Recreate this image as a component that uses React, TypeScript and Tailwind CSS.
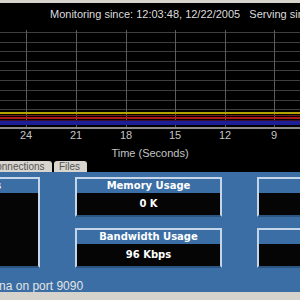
import React from "react";

type stat = {
    title: string;
    value: string;
    id: number;
};

const hLines = [2, 12, 21, 31, 40, 50, 60, 70, 79];
const vLines = [26, 76, 126, 175, 225, 274];
const ticks = ["24", "21", "18", "15", "12", "9"];

const Chart: React.FC = () => {
    return (
        <svg width={300} height={130} className="block">
            {hLines.map((y) => (
                <line key={y} x1={0} x2={300} y1={y + 0.5} y2={y + 0.5} stroke="#3e3e3e" strokeWidth={1}/>
            ))}
            {vLines.map((x) => (
                <line key={x} x1={x + 0.5} x2={x + 0.5} y1={0} y2={98} stroke="#5c5c5c" strokeWidth={1}/>
            ))}
            <rect x={0} y={82} width={300} height={2} fill="#b4a400"/>
            <rect x={0} y={85} width={300} height={1} fill="#6e1a12"/>
            <rect x={0} y={87} width={300} height={2} fill="#a8181c"/>
            <rect x={0} y={90} width={300} height={1} fill="#3a1030"/>
            <rect x={0} y={91} width={300} height={4} fill="#1e1e96"/>
            <rect x={0} y={97} width={300} height={2} fill="#8c8c8c"/>
            {vLines.map((x, i) => (
                <text
                    key={x}
                    x={x}
                    y={109}
                    textAnchor="middle"
                    fontSize={11}
                    fill="#c4c4c4"
                    fontFamily="'Liberation Sans', Arial, sans-serif"
                >
                    {ticks[i]}
                </text>
            ))}
            <text
                x={150}
                y={127}
                textAnchor="middle"
                fontSize={11}
                fill="#c4c4c4"
                fontFamily="'Liberation Sans', Arial, sans-serif"
            >
                Time (Seconds)
            </text>
        </svg>
    );
};

const StatBox: React.FC<{ stat: stat; tall?: boolean }> = ({stat, tall}) => {
    return (
        <div
            className={
                "flex flex-col border-2 border-[#c6d6ea] border-b-[#2c5582] " +
                (tall ? "h-[91px]" : "h-[40px]")
            }
        >
            <div className="h-[14px] shrink-0 flex items-center justify-center text-[10px] font-bold text-white leading-none">
                {stat.title}
            </div>
            <div className="flex-1 bg-[#050505] flex items-center justify-center text-[10px] font-bold text-white leading-none">
                {stat.value}
            </div>
        </div>
    );
};

const App: React.FC = () => {
    const middle: stat[] = [
        {title: "Memory Usage", value: "0 K", id: 1},
        {title: "Bandwidth Usage", value: "96 Kbps", id: 2},
    ];
    const right: stat[] = [
        {title: "Players", value: "0", id: 3},
        {title: "Listeners", value: "", id: 4},
    ];

    return (
        <div className="w-[300px] h-[300px] overflow-hidden bg-black flex flex-col font-['Liberation_Sans',Arial,sans-serif]">
            <div className="h-[3px] shrink-0 bg-[#d6d3cc]"/>
            <div className="h-[27px] shrink-0 pl-[50px] pt-[3px] text-[11px] text-[#dcdcdc] whitespace-nowrap">
                Monitoring since: 12:03:48, 12/22/2005&nbsp;&nbsp;&nbsp;Serving since: 12:03:48
            </div>
            <Chart/>
            <div className="h-[12px] shrink-0 flex items-end gap-[2px] ml-[-14px]">
                <div className="h-[11px] w-[66px] bg-[#d8d5ce] rounded-t-[3px] text-[10px] leading-[11px] text-[#555] pl-[3px] whitespace-nowrap">
                    Connections
                </div>
                <div className="h-[11px] w-[33px] bg-[#d8d5ce] rounded-t-[3px] text-[10px] leading-[11px] text-[#555] pl-[5px]">
                    Files
                </div>
            </div>
            <div className="h-[120px] shrink-0 bg-[#3a6ea5] pt-[5px] flex flex-col font-['DejaVu_Sans',Verdana,sans-serif]">
                <div className="flex gap-[35px] ml-[-107px]">
                    <div className="w-[147px] shrink-0">
                        <StatBox stat={{title: "Connections", value: "", id: 0}} tall/>
                    </div>
                    <div className="w-[147px] shrink-0 flex flex-col gap-[11px]">
                        {middle.map((s) => <StatBox key={s.id} stat={s}/>)}
                    </div>
                    <div className="w-[147px] shrink-0 flex flex-col gap-[11px]">
                        {right.map((s) => <StatBox key={s.id} stat={s}/>)}
                    </div>
                </div>
                <div className="mt-[9px] ml-[-103px] text-[12px] text-[#e4e4e4] whitespace-nowrap font-['Liberation_Sans',Arial,sans-serif]">
                    Streaming to Antenna on port 9090
                </div>
            </div>
            <div className="flex-1 bg-[#d6d3cc]"/>
        </div>
    );
};

export default App;
